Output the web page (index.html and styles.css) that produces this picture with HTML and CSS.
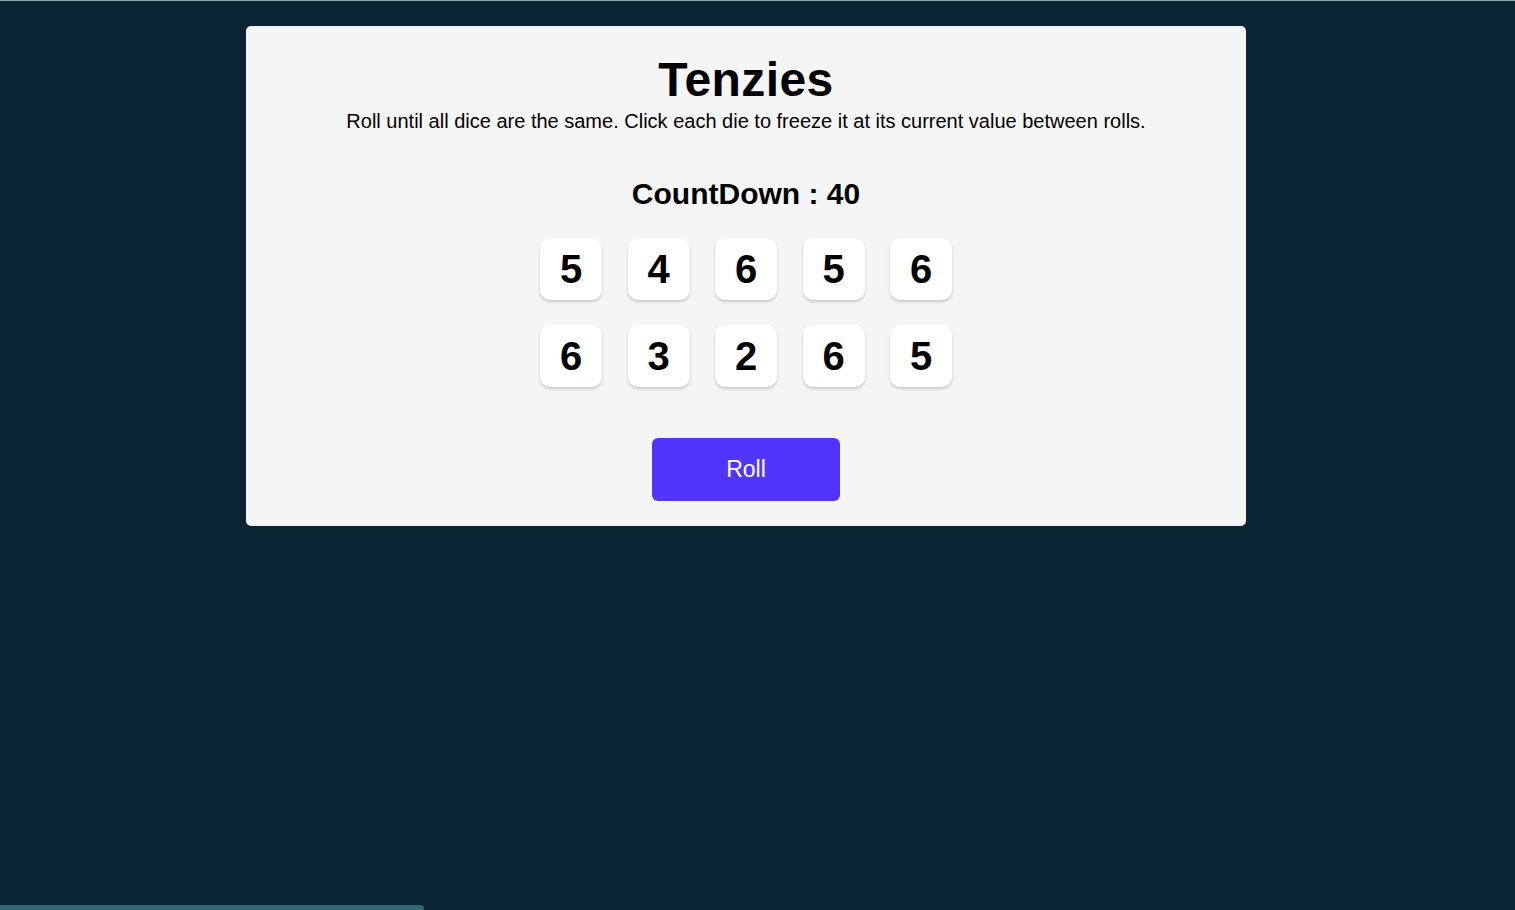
FILE: index.html
```html
<!DOCTYPE html>
<html lang="en">
<head>
<meta charset="utf-8">
<title>Tenzies</title>
<link rel="stylesheet" href="styles.css">
</head>
<body>
<div class="page">
  <main class="card">
    <h1 class="title">Tenzies</h1>
    <p class="instructions">Roll until all dice are the same. Click each die to freeze it at its current value between rolls.</p>
    <h2 class="countdown">CountDown : 40</h2>
    <div class="dice">
      <button class="die">5</button>
      <button class="die">4</button>
      <button class="die">6</button>
      <button class="die">5</button>
      <button class="die">6</button>
      <button class="die">6</button>
      <button class="die">3</button>
      <button class="die">2</button>
      <button class="die">6</button>
      <button class="die">5</button>
    </div>
    <button class="roll">Roll</button>
  </main>
</div>
<div class="progress"></div>
</body>
</html>
```
FILE: styles.css
```css
html, body {
  margin: 0;
  padding: 0;
  height: 100%;
}
body {
  background: #0b2434;
  font-family: "Liberation Sans", Arial, sans-serif;
  color: #000;
  border-top: 1px solid #8ea6ab;
  box-sizing: border-box;
  overflow: hidden;
}
.page {
  padding: 25px 0 0 246px;
}
.card {
  width: 1000px;
  height: 500px;
  box-sizing: border-box;
  background: #f5f5f5;
  border-radius: 5px;
  padding-top: 26px;
  display: flex;
  flex-direction: column;
  align-items: center;
}
.title {
  margin: 0;
  font-size: 48px;
  font-weight: bold;
  line-height: normal;
  letter-spacing: 0.4px;
}
.instructions {
  margin: 3px 0 0;
  font-size: 20px;
  line-height: normal;
}
.countdown {
  margin: 44px 0 0;
  font-size: 30px;
  font-weight: bold;
  line-height: normal;
}
.dice {
  margin-top: 27px;
  display: grid;
  grid-template-columns: repeat(5, 62px);
  grid-auto-rows: 62px;
  column-gap: 25.5px;
  row-gap: 25px;
}
.die {
  border: none;
  background: #fff;
  border-radius: 10px;
  box-shadow: 0 2px 3px rgba(0, 0, 0, 0.18);
  font-family: "Liberation Sans", Arial, sans-serif;
  font-size: 40px;
  font-weight: bold;
  color: #000;
  padding: 0;
  cursor: pointer;
}
.roll {
  margin-top: 51px;
  width: 188px;
  height: 63px;
  border: none;
  border-radius: 6px;
  background: #5035ff;
  color: #fff;
  font-family: "Liberation Sans", Arial, sans-serif;
  font-size: 23px;
  cursor: pointer;
}
.progress {
  position: fixed;
  left: 0;
  bottom: 0;
  width: 424px;
  height: 5px;
  background: #2f6872;
  border-top-right-radius: 4px;
}
```
